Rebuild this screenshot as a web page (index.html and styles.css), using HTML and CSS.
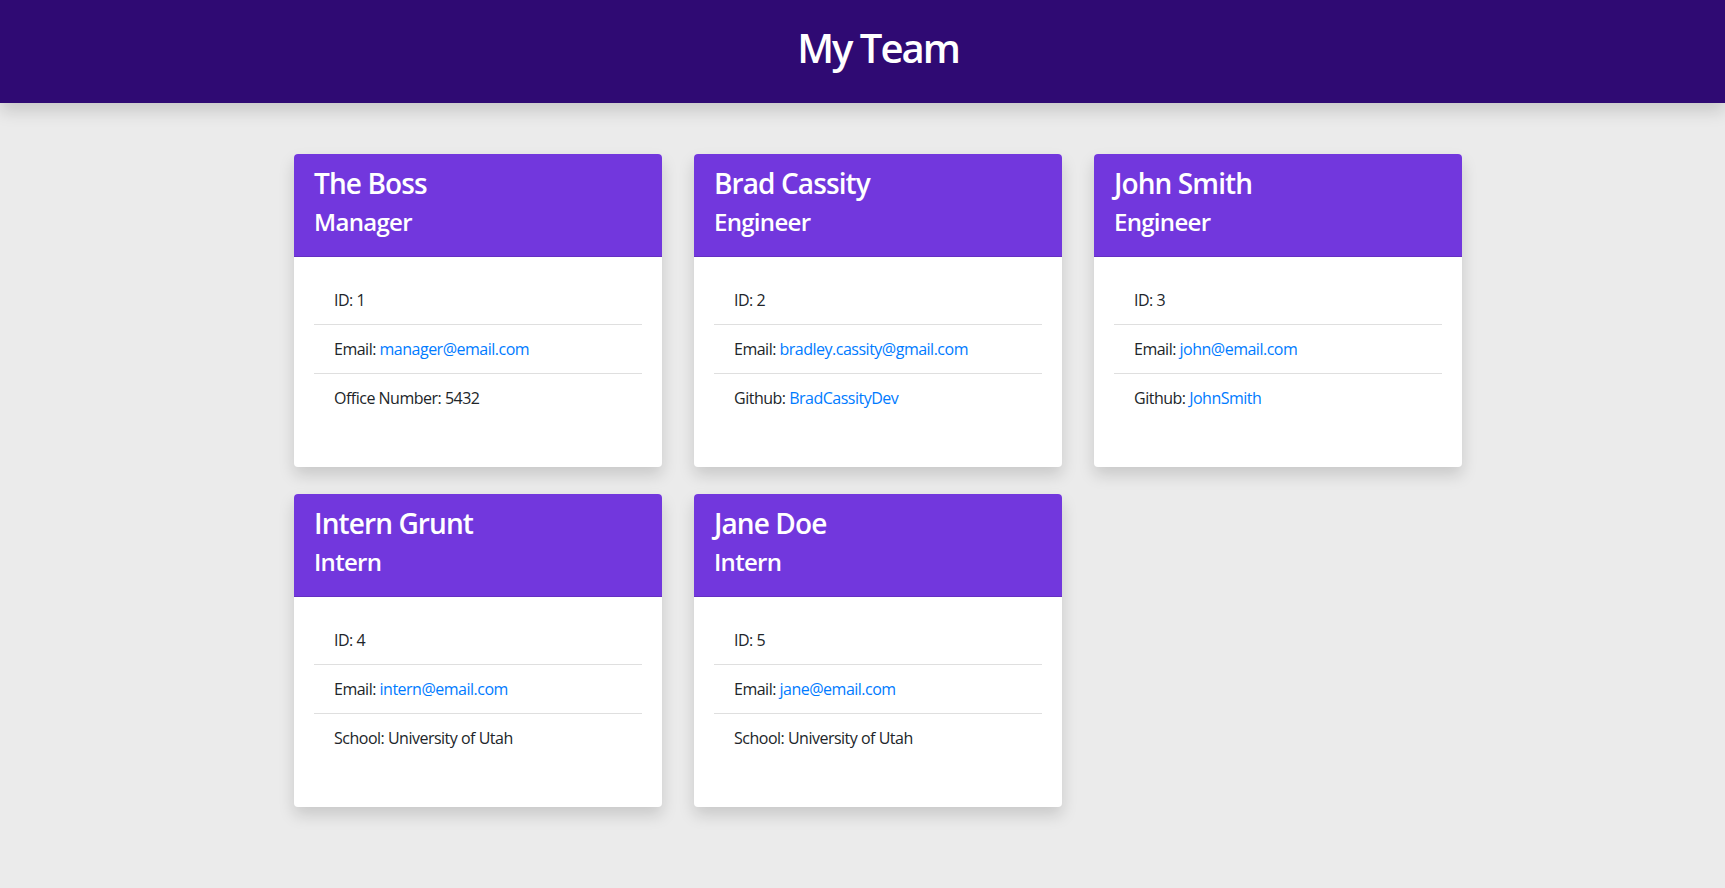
FILE: index.html
```html
<!DOCTYPE html>
<html lang="en">
<head>
<meta charset="utf-8">
<title>My Team</title>
<link rel="stylesheet" href="styles.css">
</head>
<body>
<header class="navbar">
  <h1 class="title">My Team</h1>
</header>
<main class="page">
  <div class="team">
    <div class="card">
      <div class="card-header">
        <h3 class="name">The Boss</h3>
        <h4 class="role">Manager</h4>
      </div>
      <div class="card-body">
        <ul class="list">
          <li class="item">ID: 1</li>
          <li class="item">Email: <a class="link" href="#">manager@email.com</a></li>
          <li class="item">Office Number: 5432</li>
        </ul>
      </div>
    </div>
    <div class="card">
      <div class="card-header">
        <h3 class="name">Brad Cassity</h3>
        <h4 class="role">Engineer</h4>
      </div>
      <div class="card-body">
        <ul class="list">
          <li class="item">ID: 2</li>
          <li class="item">Email: <a class="link" href="#">bradley.cassity@gmail.com</a></li>
          <li class="item">Github: <a class="link" href="#">BradCassityDev</a></li>
        </ul>
      </div>
    </div>
    <div class="card">
      <div class="card-header">
        <h3 class="name">John Smith</h3>
        <h4 class="role">Engineer</h4>
      </div>
      <div class="card-body">
        <ul class="list">
          <li class="item">ID: 3</li>
          <li class="item">Email: <a class="link" href="#">john@email.com</a></li>
          <li class="item">Github: <a class="link" href="#">JohnSmith</a></li>
        </ul>
      </div>
    </div>
    <div class="card">
      <div class="card-header">
        <h3 class="name">Intern Grunt</h3>
        <h4 class="role">Intern</h4>
      </div>
      <div class="card-body">
        <ul class="list">
          <li class="item">ID: 4</li>
          <li class="item">Email: <a class="link" href="#">intern@email.com</a></li>
          <li class="item">School: University of Utah</li>
        </ul>
      </div>
    </div>
    <div class="card">
      <div class="card-header">
        <h3 class="name">Jane Doe</h3>
        <h4 class="role">Intern</h4>
      </div>
      <div class="card-body">
        <ul class="list">
          <li class="item">ID: 5</li>
          <li class="item">Email: <a class="link" href="#">jane@email.com</a></li>
          <li class="item">School: University of Utah</li>
        </ul>
      </div>
    </div>
  </div>
</main>
</body>
</html>
```
FILE: styles.css
```css
* { box-sizing: border-box; }
html, body {
  margin: 0;
  padding: 0;
}
body {
  background: #ebebeb;
  font-family: "Open Sans", "Noto Sans", "Liberation Sans", sans-serif;
  font-size: 16px;
  line-height: 24px;
  color: #212529;
  min-height: 888px;
}
.navbar {
  position: relative;
  z-index: 1;
  background: #2f0a73;
  height: 103px;
  padding: 24px 0 0 31px;
  box-shadow: 0 8px 16px rgba(0,0,0,0.15);
  text-align: center;
}
.title {
  margin: 0;
  font-size: 40px;
  line-height: 48px;
  font-weight: 600;
  color: #ffffff;
  letter-spacing: -2px;
}
.page {
  padding: 51px 0 40px 31px;
}
.team {
  display: grid;
  grid-template-columns: repeat(3, 368px);
  column-gap: 32px;
  row-gap: 27px;
  justify-content: center;
}
.card {
  background: #ffffff;
  border-radius: 4px;
  overflow: hidden;
  box-shadow: 0 8px 16px rgba(0,0,0,0.15);
  height: 313px;
}
.card-header {
  background: #7237dd;
  padding: 13px 20px 12px;
  border-bottom: 1px solid rgba(0,0,0,0.125);
}
.name {
  margin: 0 0 7px;
  font-size: 28px;
  line-height: 33.6px;
  font-weight: 600;
  color: #ffffff;
  letter-spacing: -0.9px;
}
.role {
  margin: 0 0 8px;
  font-size: 24px;
  line-height: 28.8px;
  font-weight: 600;
  color: #ffffff;
  letter-spacing: -0.7px;
}
.card-body {
  padding: 19px 20px 20px;
}
.list {
  list-style: none;
  margin: 0;
  padding: 0;
}
.item {
  padding: 12px 20px;
  border-top: 1px solid rgba(0,0,0,0.125);
  letter-spacing: -0.5px;
}
.item:first-child {
  border-top: none;
}
.link {
  color: #007bff;
  text-decoration: none;
}
```
